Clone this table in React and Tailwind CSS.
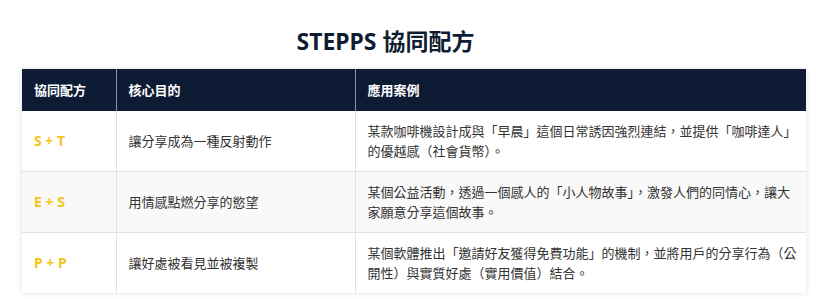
export default function App() {
  const rows = [
    {
      k: "S + T",
      goal: "讓分享成為一種反射動作",
      ex: ["某款咖啡機設計成與「早晨」這個日常誘因強烈連結，並提供「咖啡達人」", "的優越感（社會貨幣）。"],
      bg: "bg-white",
    },
    {
      k: "E + S",
      goal: "用情感點燃分享的慾望",
      ex: ["某個公益活動，透過一個感人的「小人物故事」，激發人們的同情心，讓大", "家願意分享這個故事。"],
      bg: "bg-[#f9f9f9]",
    },
    {
      k: "P + P",
      goal: "讓好處被看見並被複製",
      ex: ["某個軟體推出「邀請好友獲得免費功能」的機制，並將用戶的分享行為（公", "開性）與實質好處（實用價值）結合。"],
      bg: "bg-white",
    },
  ];
  const font = { fontFamily: '"Noto Sans", "Noto Sans CJK TC", sans-serif' };
  return (
    <div className="w-[816px] h-[299px] bg-white overflow-hidden" style={font}>
      <div className="pr-[45px] pt-[24px] text-center">
        <h1 className="text-[23px] leading-[34px] font-bold text-[#0f1d33]">STEPPS 協同配方</h1>
      </div>
      <div className="pl-[22px] pr-[10px] mt-[11px]">
        <table className="w-[784px] table-fixed border-collapse shadow-[0_0_6px_rgba(0,0,0,0.12)] text-[13px] leading-[20px]">
          <colgroup>
            <col className="w-[94px]" />
            <col className="w-[239px]" />
            <col className="w-[451px]" />
          </colgroup>
          <thead>
            <tr className="bg-[#0d1b35] text-white">
              <th className="text-left font-bold px-[12px] py-[11px] border-r border-[#8a93a3]">協同配方</th>
              <th className="text-left font-bold px-[12px] py-[11px] border-r border-[#8a93a3]">核心目的</th>
              <th className="text-left font-bold px-[12px] py-[11px]">應用案例</th>
            </tr>
          </thead>
          <tbody>
            {rows.map((r, i) => (
              <tr key={i} className={`${r.bg} ${i > 0 ? "border-t border-[#e3e3e3]" : ""}`}>
                <td className="px-[12px] py-[10px] border-r border-[#e3e3e3] font-bold text-[14px] text-[#f5c518] align-middle">{r.k}</td>
                <td className="px-[12px] py-[10px] border-r border-[#e3e3e3] text-[#333] align-middle">{r.goal}</td>
                <td className="pl-[12px] pr-[4px] py-[10px] text-[#333] align-middle whitespace-nowrap">
                  {r.ex[0]}
                  <br />
                  {r.ex[1]}
                </td>
              </tr>
            ))}
          </tbody>
        </table>
      </div>
    </div>
  );
}
